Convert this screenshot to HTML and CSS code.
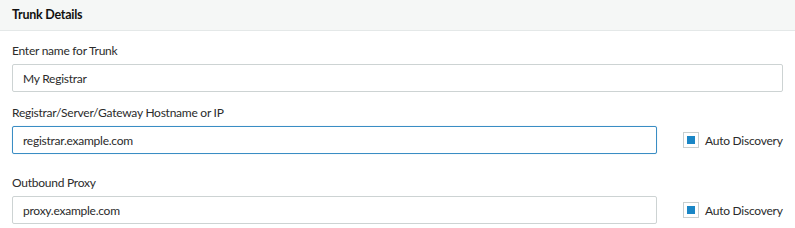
FILE: index.html
```html
<!DOCTYPE html>
<html lang="en">
<head>
    <meta charset="UTF-8">
    <meta name="viewport" content="width=device-width, initial-scale=1.0">
    <title>Trunk Details</title>
    <link rel="stylesheet" href="styles.css">
</head>
<body>

<div class="panel">
    <!-- Panel Header -->
    <div class="panel-header">Trunk Details</div>

    <!-- Trunk Form -->
    <form class="panel-body">
        <div class="form-group">
            <label for="trunkName">Enter name for Trunk</label>
            <input type="text" id="trunkName" value="My Registrar">
        </div>
        <div class="form-group">
            <label for="hostName">Registrar/Server/Gateway Hostname or IP</label>
            <div class="form-row">
                <input type="text" id="hostName" class="focused" value="registrar.example.com">
                <span class="check"><span class="check-box"></span>Auto Discovery</span>
            </div>
        </div>
        <div class="form-group">
            <label for="proxy">Outbound Proxy</label>
            <div class="form-row">
                <input type="text" id="proxy" value="proxy.example.com">
                <span class="check"><span class="check-box"></span>Auto Discovery</span>
            </div>
        </div>
    </form>
</div>

</body>
</html>
```

FILE: styles.css
```css
/* General Styling */
body {
    margin: 0;
    font-family: Lato, "Open Sans", sans-serif;
    font-size: 12px;
    letter-spacing: -0.25px;
    color: #2b2b2b;
    background: #fff;
}

/* Panel Header */
.panel-header {
    height: 30px;
    line-height: 30px;
    padding: 0 12px;
    background-color: #f5f7f6;
    border-bottom: 1px solid #e4e8e8;
    font-size: 12.5px;
    font-weight: bold;
    color: #111;
}

/* Form Styling */
.panel-body {
    padding: 11px 12px 0 12px;
    margin: 0;
}
.form-group {
    margin-bottom: 12px;
}
.form-group + .form-group + .form-group {
    margin-top: 20px;
}
.form-group label {
    display: block;
    line-height: 18px;
    margin-bottom: 4px;
}
.form-group input {
    display: block;
    width: 100%;
    height: 28px;
    padding: 0 10px;
    font-family: inherit;
    font-size: 12px;
    letter-spacing: -0.25px;
    color: #2b2b2b;
    border: 1px solid #cdd3d3;
    border-radius: 2px;
    box-sizing: border-box;
    outline: none;
}
.form-group input.focused {
    border-color: #3a8dc4;
    box-shadow: 0 0 1px rgba(58, 141, 196, 0.4);
}

/* Input with checkbox */
.form-row {
    display: flex;
    align-items: center;
}
.form-row input {
    width: 645px;
    flex: none;
}
.check {
    display: flex;
    align-items: center;
    margin-left: 26px;
    white-space: nowrap;
}
.check-box {
    width: 14px;
    height: 14px;
    margin-right: 6px;
    border: 1px solid #c9cfcf;
    background: #fff;
    position: relative;
}
.check-box::after {
    content: "";
    position: absolute;
    left: 3px;
    top: 3px;
    width: 8px;
    height: 8px;
    background: #1a86c6;
}
```
